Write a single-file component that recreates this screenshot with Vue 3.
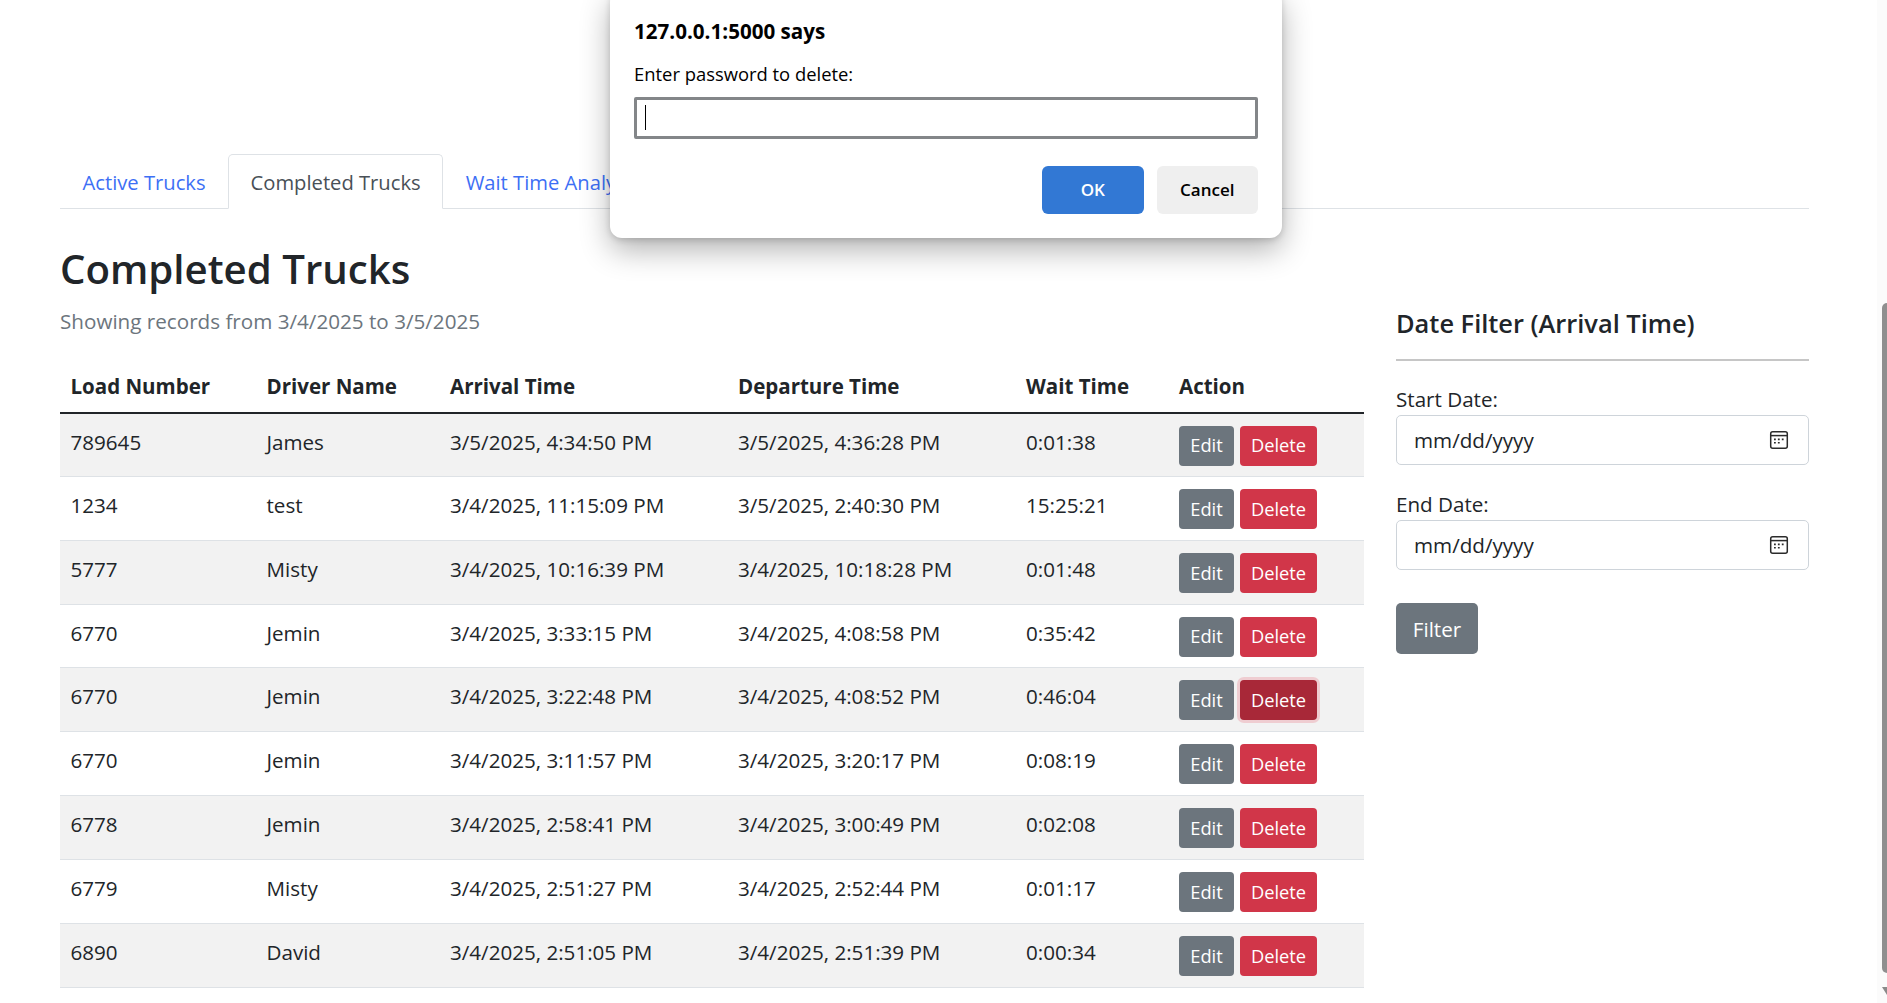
<script setup>
const rows = [
  ['789645', 'James', '3/5/2025, 4:34:50 PM', '3/5/2025, 4:36:28 PM', '0:01:38'],
  ['1234', 'test', '3/4/2025, 11:15:09 PM', '3/5/2025, 2:40:30 PM', '15:25:21'],
  ['5777', 'Misty', '3/4/2025, 10:16:39 PM', '3/4/2025, 10:18:28 PM', '0:01:48'],
  ['6770', 'Jemin', '3/4/2025, 3:33:15 PM', '3/4/2025, 4:08:58 PM', '0:35:42'],
  ['6770', 'Jemin', '3/4/2025, 3:22:48 PM', '3/4/2025, 4:08:52 PM', '0:46:04'],
  ['6770', 'Jemin', '3/4/2025, 3:11:57 PM', '3/4/2025, 3:20:17 PM', '0:08:19'],
  ['6778', 'Jemin', '3/4/2025, 2:58:41 PM', '3/4/2025, 3:00:49 PM', '0:02:08'],
  ['6779', 'Misty', '3/4/2025, 2:51:27 PM', '3/4/2025, 2:52:44 PM', '0:01:17'],
  ['6890', 'David', '3/4/2025, 2:51:05 PM', '3/4/2025, 2:51:39 PM', '0:00:34'],
]
const filters = ['Start Date:', 'End Date:']
</script>

<template>
  <div class="page">
    <nav class="tabs">
      <a class="tab">Active Trucks</a>
      <a class="tab active">Completed Trucks</a>
      <a class="tab">Wait Time Analysis</a>
    </nav>
    <div class="content">
      <main class="main">
        <h1>Completed Trucks</h1>
        <p class="muted">Showing records from 3/4/2025 to 3/5/2025</p>
        <table>
          <colgroup>
            <col class="c1" /><col class="c2" /><col class="c3" /><col class="c4" /><col class="c5" /><col />
          </colgroup>
          <thead>
            <tr>
              <th>Load Number</th><th>Driver Name</th><th>Arrival Time</th><th>Departure Time</th><th>Wait Time</th><th>Action</th>
            </tr>
          </thead>
          <tbody>
            <tr v-for="(r, i) in rows" :key="i">
              <td v-for="(c, j) in r" :key="j">{{ c }}</td>
              <td class="actions">
                <button class="btn edit">Edit</button>
                <button class="btn del" :class="{ focus: i === 4 }">Delete</button>
              </td>
            </tr>
          </tbody>
        </table>
      </main>
      <aside class="side">
        <h2>Date Filter (Arrival Time)</h2>
        <hr />
        <div v-for="f in filters" :key="f" class="field">
          <label>{{ f }}</label>
          <div class="date">
            <span>mm/dd/yyyy</span>
            <svg width="20" height="20" viewBox="0 0 20 20" fill="none">
              <rect x="1.7" y="1.7" width="16.6" height="16.6" rx="2" stroke="#2b2b2b" stroke-width="1.5" />
              <path d="M2 5.6h16" stroke="#2b2b2b" stroke-width="1.5" />
              <path d="M5 8.6h1.8v1.6H5zM8.9 8.6h1.8v1.6H8.900zM12.800 8.600h1.800v1.600h-1.800zM5 12h1.800v1.600H5zM8.900 12h1.800v1.600H8.900z" fill="#2b2b2b" />
            </svg>
          </div>
        </div>
        <button class="filter">Filter</button>
      </aside>
    </div>

    <div class="dialog">
      <div class="d-title">127.0.0.1:5000 says</div>
      <div class="d-msg">Enter password to delete:</div>
      <div class="d-input"><i class="caret"></i></div>
      <div class="d-btns">
        <button class="d-ok">OK</button>
        <button class="d-cancel">Cancel</button>
      </div>
    </div>

    <div class="scrollbar">
      <div class="thumb"></div>
      <svg class="arrow" width="10" height="8" viewBox="0 0 10 8"><path d="M0 0h10L5 8z" fill="#8a8a8a" /></svg>
    </div>
  </div>
</template>

<style>
html, body { margin: 0; height: 100%; overflow: hidden; background: #fff; }
</style>

<style scoped>
.page {
  position: relative;
  height: 1003px;
  overflow: hidden;
  box-sizing: border-box;
  padding: 154px 78px 0 60px;
  font-family: "Open Sans", "Noto Sans", sans-serif;
  font-size: 20.6px;
  color: #212529;
}
.tabs { display: flex; height: 55px; box-sizing: border-box; border-bottom: 1.25px solid #dee2e6; }
.tab {
  box-sizing: border-box; height: 55px; padding: 0 21.5px; line-height: 54px; font-size: 20.2px;
  color: #3d6ff5; border: 1.25px solid transparent; border-radius: 5px 5px 0 0;
}
.active { color: #495057; background: #fff; border-color: #dee2e6 #dee2e6 #fff; }
.content { display: flex; gap: 32px; }
.main { width: 1304px; flex: none; }
h1 { margin: 36px 0 0; font-size: 40.2px; line-height: 48px; font-weight: 600; }
.muted { margin: 13px 0 0; line-height: 30px; color: #6c757d; font-size: 20.65px; }
table { width: 100%; margin-top: 23px; border-collapse: collapse; table-layout: fixed; }
.c1 { width: 196px; } .c2 { width: 183.5px; } .c3 { width: 288px; } .c4 { width: 288px; } .c5 { width: 153px; }
th { text-align: left; font-weight: 700; font-size: 20.5px; padding: 2px 10.5px 0; height: 50.5px; border-bottom: 2.5px solid #212529; }
td { padding: 0 10.5px; height: 63.85px; box-sizing: border-box; border-bottom: 1.25px solid #dee2e6; white-space: nowrap; vertical-align: top; line-height: 56px; }
tbody tr:nth-child(odd) td { background: #f2f2f2; }
.actions { line-height: 1; padding-top: 12px; }
.btn {
  font: inherit; font-size: 18.3px; height: 40px; padding: 0; border: 0; border-radius: 4px; color: #fff; vertical-align: top;
}
.edit { background: #6c757d; margin-right: 6px; width: 55px; }
.del { background: #d13649; width: 77px; }
.del.focus { background: #a82838; box-shadow: 0 0 0 3px #efcdd1; }
.side { width: 413px; flex: none; padding-top: 99px; }
h2 { margin: 0; font-size: 25.4px; line-height: 30px; font-weight: 600; }
hr { margin: 21px 0 23px; border: 0; border-top: 2px solid #c6c6c6; }
.field { margin-bottom: 24px; }
label { display: block; line-height: 30px; margin-bottom: 1px; }
.date {
  box-sizing: border-box; height: 50px; display: flex; align-items: center; justify-content: space-between;
  padding: 0 19px 0 17px; border: 1.25px solid #ced4da; border-radius: 5px; color: #212529;
}
.filter {
  font: inherit; margin-top: 9px; height: 51px; width: 82px; border: 0; border-radius: 5px; background: #6c757d; color: #fff;
}
.dialog {
  position: absolute; left: 610px; top: -10px; width: 672px; height: 248px; box-sizing: border-box;
  padding: 27px 24px 0 24px; background: #fff; border-radius: 12px;
  box-shadow: 0 12px 30px rgba(0, 0, 0, 0.3), 0 2px 6px rgba(0, 0, 0, 0.15);
  color: #000; font-size: 18.4px;
}
.d-title { font-weight: 700; font-size: 20.6px; line-height: 28px; }
.d-msg { margin-top: 15px; line-height: 28px; }
.d-input { position: relative; box-sizing: border-box; margin-top: 8.5px; height: 42px; border: 3px solid #838689; border-radius: 2px; }
.caret { position: absolute; left: 8px; top: 5px; width: 1px; height: 25px; background: #000; }
.d-btns { display: flex; justify-content: flex-end; gap: 13px; margin-top: 27px; }
.d-btns button { font: inherit; font-weight: 600; font-size: 17px; height: 48px; width: 101.5px; border: 0; border-radius: 6px; }
.d-ok { background: #3278d4; color: #fff; }
.d-cancel { background: #efefef; color: #000; }
.scrollbar { position: absolute; right: 0; top: 0; width: 10px; height: 1003px; background: #fbfbfb; }
.thumb { position: absolute; left: 5px; right: 0; top: 303px; height: 670px; background: #8f8f8f; border-radius: 5px 0 0 5px; }
.arrow { position: absolute; left: 5px; top: 987px; }
</style>
